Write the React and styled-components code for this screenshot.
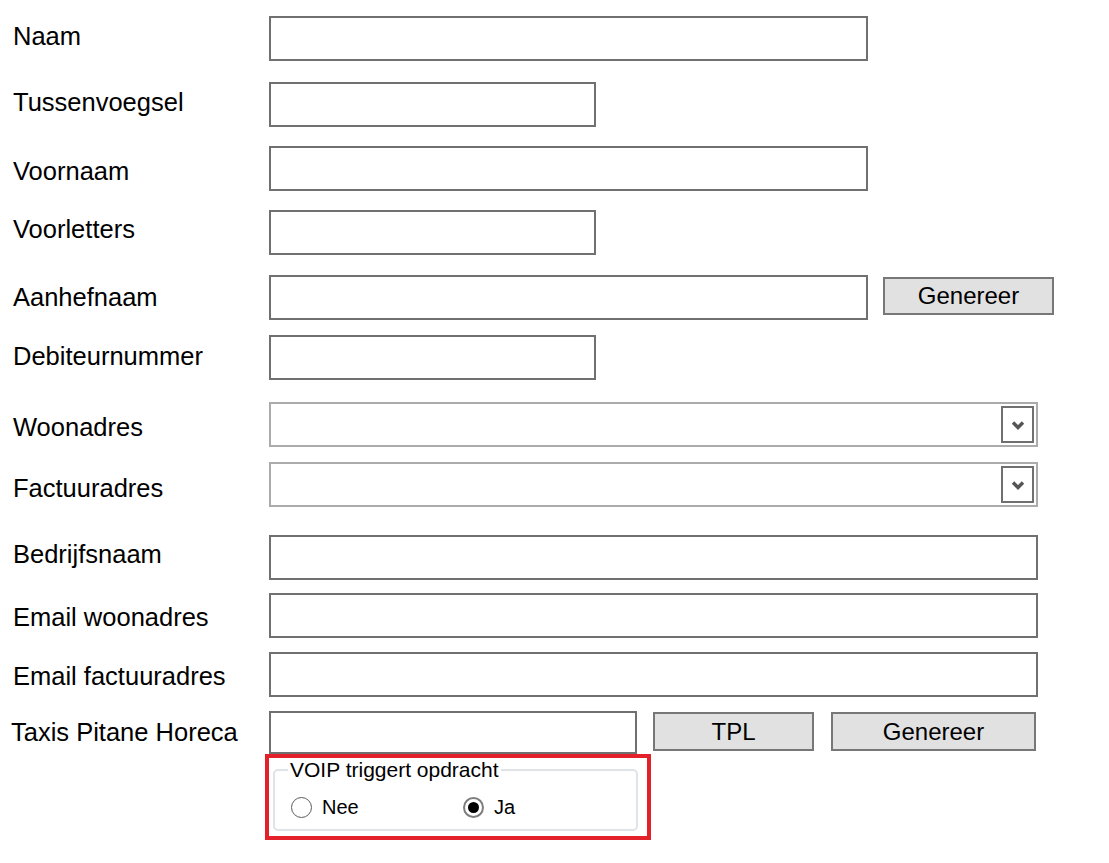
import styled, { createGlobalStyle } from 'styled-components'

const GlobalStyle = createGlobalStyle`
   body {
      margin: 0;
      background: #ffffff;
      font-family: 'Liberation Sans', Arial, sans-serif;
      color: #000000;
   }
`

function Chevron() {
   return (
      <svg width="14" height="10" viewBox="0 0 14 10">
         <polyline
            points="2,2.5 7,7.5 12,2.5"
            fill="none"
            stroke="#555555"
            strokeWidth="3.4"
         />
      </svg>
   )
}

function Combo() {
   return (
      <Select>
         <ArrowBox>
            <Chevron />
         </ArrowBox>
      </Select>
   )
}

function App() {
   return (
      <Page>
         <GlobalStyle />
         <Row $top={0}>
            <Label $dy={-2}>Naam</Label>
            <TextBox $w={599} />
         </Row>
         <Row $top={21}>
            <Label $dy={-2.5}>Tussenvoegsel</Label>
            <TextBox $w={327} />
         </Row>
         <Row $top={19}>
            <Label $dy={2.5}>Voornaam</Label>
            <TextBox $w={599} />
         </Row>
         <Row $top={19}>
            <Label $dy={-3.5}>Voorletters</Label>
            <TextBox $w={327} />
         </Row>
         <Row $top={20}>
            <Label $dy={0}>Aanhefnaam</Label>
            <TextBox $w={599} />
            <Button $w={171} $gap={15} $h={38} $y={2}>
               Genereer
            </Button>
         </Row>
         <Row $top={15}>
            <Label $dy={-1}>Debiteurnummer</Label>
            <TextBox $w={327} />
         </Row>
         <Row $top={22}>
            <Label $dy={3}>Woonadres</Label>
            <Combo />
         </Row>
         <Row $top={15}>
            <Label $dy={3.5}>Factuuradres</Label>
            <Combo />
         </Row>
         <Row $top={28}>
            <Label $dy={-3.5}>Bedrijfsnaam</Label>
            <TextBox $w={769} />
         </Row>
         <Row $top={13}>
            <Label $dy={2}>Email woonadres</Label>
            <TextBox $w={769} />
         </Row>
         <Row $top={14}>
            <Label $dy={2}>Email factuuradres</Label>
            <TextBox $w={769} />
         </Row>
         <Row $top={14} $h={43}>
            <Label $dy={0} $indent={11}>
               Taxis Pitane Horeca
            </Label>
            <TextBox $w={368} $h={43} />
            <Button $w={161} $gap={16} $h={39} $y={1}>
               TPL
            </Button>
            <Button $w={205} $gap={17} $h={39} $y={1}>
               Genereer
            </Button>
         </Row>
         <Highlight>
            <Group>
               <Legend>VOIP triggert opdracht</Legend>
               <Radios>
                  <RadioItem>
                     <Circle />
                     Nee
                  </RadioItem>
                  <RadioItem>
                     <Circle $checked>
                        <Dot />
                     </Circle>
                     Ja
                  </RadioItem>
               </Radios>
            </Group>
         </Highlight>
      </Page>
   )
}

export default App

const Page = styled.div`
   padding-top: 16px;
   width: 1109px;
   min-height: 863px;
   box-sizing: border-box;
`
const Row = styled.div`
   display: flex;
   align-items: center;
   height: ${(p) => p.$h || 45}px;
   margin-top: ${(p) => p.$top}px;
`
const Label = styled.div`
   width: 269px;
   box-sizing: border-box;
   padding-left: ${(p) => p.$indent || 13}px;
   padding-top: ${(p) => Math.max(0, p.$dy * 2)}px;
   padding-bottom: ${(p) => Math.max(0, -p.$dy * 2)}px;
   font-size: 25.5px;
   white-space: nowrap;
   color: #000000;
`
const TextBox = styled.input`
   width: ${(p) => p.$w}px;
   height: ${(p) => p.$h || 45}px;
   box-sizing: border-box;
   margin: 0;
   padding: 0 6px;
   border: 2px solid #707070;
   background: #ffffff;
   font-family: 'Liberation Sans', Arial, sans-serif;
   font-size: 22px;
   outline: none;
`
const Select = styled.div`
   width: 769px;
   height: 45px;
   box-sizing: border-box;
   border: 2px solid #ababab;
   background: #ffffff;
   display: flex;
   align-items: center;
   justify-content: flex-end;
   padding-right: 2px;
`
const ArrowBox = styled.div`
   width: 33px;
   height: 37px;
   box-sizing: border-box;
   border: 2px solid #707070;
   display: flex;
   align-items: center;
   justify-content: center;
`
const Button = styled.button`
   width: ${(p) => p.$w}px;
   height: ${(p) => p.$h}px;
   margin: ${(p) => p.$y}px 0 0 ${(p) => p.$gap}px;
   align-self: flex-start;
   box-sizing: border-box;
   padding: 0;
   background: #e1e1e1;
   border: 2px solid #777777;
   font-family: 'Liberation Sans', Arial, sans-serif;
   font-size: 24px;
   color: #000000;
`
const Highlight = styled.div`
   margin-left: 265px;
   width: 386px;
   height: 86px;
   box-sizing: border-box;
   border: 4px solid #e3212b;
`
const Group = styled.fieldset`
   margin: 0 0 0 4px;
   width: 365px;
   box-sizing: border-box;
   padding: 14px 0 13px 13px;
   border: 2px solid #dfe4e8;
   border-radius: 5px;
`
const Legend = styled.legend`
   padding: 0 2px;
   font-size: 21px;
   line-height: 24px;
   color: #000000;
`
const Radios = styled.div`
   display: grid;
   grid-template-columns: 172px auto;
   margin-left: 3px;
   height: 20px;
   align-items: center;
`
const RadioItem = styled.div`
   display: flex;
   align-items: center;
   gap: 10px;
   font-size: 20px;
   color: #000000;
`
const Circle = styled.span`
   width: 21px;
   height: 21px;
   box-sizing: border-box;
   border-radius: 50%;
   border: ${(p) => (p.$checked ? '2px solid #7d7d7d' : '1.5px solid #5c5c5c')};
   display: flex;
   align-items: center;
   justify-content: center;
   background: #ffffff;
`
const Dot = styled.span`
   width: 11px;
   height: 11px;
   border-radius: 50%;
   background: #000000;
`
